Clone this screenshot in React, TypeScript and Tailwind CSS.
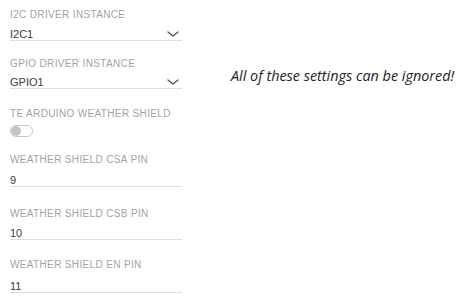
import React from "react";

function Chevron() {
  return (
    <svg width="12" height="6" viewBox="0 0 12 6" className="mr-[3px] shrink-0">
      <polyline points="1,0.9 6,5.1 11,0.9" fill="none" stroke="#555" strokeWidth="1.3" strokeLinecap="round" strokeLinejoin="round" />
    </svg>
  );
}

function Label({ text, className = "" }: { text: string; className?: string }) {
  return (
    <div className={`text-[10px] leading-[14px] tracking-[0.35px] text-[#a2a2a2] whitespace-nowrap ${className}`}>{text}</div>
  );
}

function Value({ text, select = false, className = "" }: { text: string; select?: boolean; className?: string }) {
  return (
    <div className={`flex items-center justify-between h-[13px] border-b border-[#dedede] text-[11px] leading-[12px] text-[#3a3a3a] ${className}`}>
      <span>{text}</span>
      {select && <Chevron />}
    </div>
  );
}

export default function App() {
  return (
    <div
      className="w-[458px] h-[297px] bg-white flex overflow-hidden"
      style={{ fontFamily: '"Liberation Sans", Arial, sans-serif' }}
    >
      <div className="ml-[10px] w-[172px] shrink-0 flex flex-col">
        <Label text="I2C DRIVER INSTANCE" className="mt-[8px]" />
        <Value text="I2C1" select className="mt-[6px]" />

        <Label text="GPIO DRIVER INSTANCE" className="mt-[16px]" />
        <Value text="GPIO1" select className="mt-[5px]" />

        <Label text="TE ARDUINO WEATHER SHIELD" className="mt-[18px]" />
        <div className="mt-[4px] w-[23px] h-[12px] rounded-full border border-[#c8c8c8] bg-white flex items-center">
          <div className="w-[10px] h-[10px] rounded-full bg-[#c4c4c4]" />
        </div>

        <Label text="WEATHER SHIELD CSA PIN" className="mt-[16px]" />
        <Value text="9" className="mt-[7px]" />

        <Label text="WEATHER SHIELD CSB PIN" className="mt-[20px]" />
        <Value text="10" className="mt-[6px]" />

        <Label text="WEATHER SHIELD EN PIN" className="mt-[18px]" />
        <Value text="11" className="mt-[8px]" />
      </div>
      <div className="ml-[49px] pt-[66px] shrink-0">
        <p
          className="italic text-[14.4px] leading-[20px] text-[#222] whitespace-nowrap"
          style={{ fontFamily: '"Open Sans", sans-serif' }}
        >
          All of these settings can be ignored!
        </p>
      </div>
    </div>
  );
}
